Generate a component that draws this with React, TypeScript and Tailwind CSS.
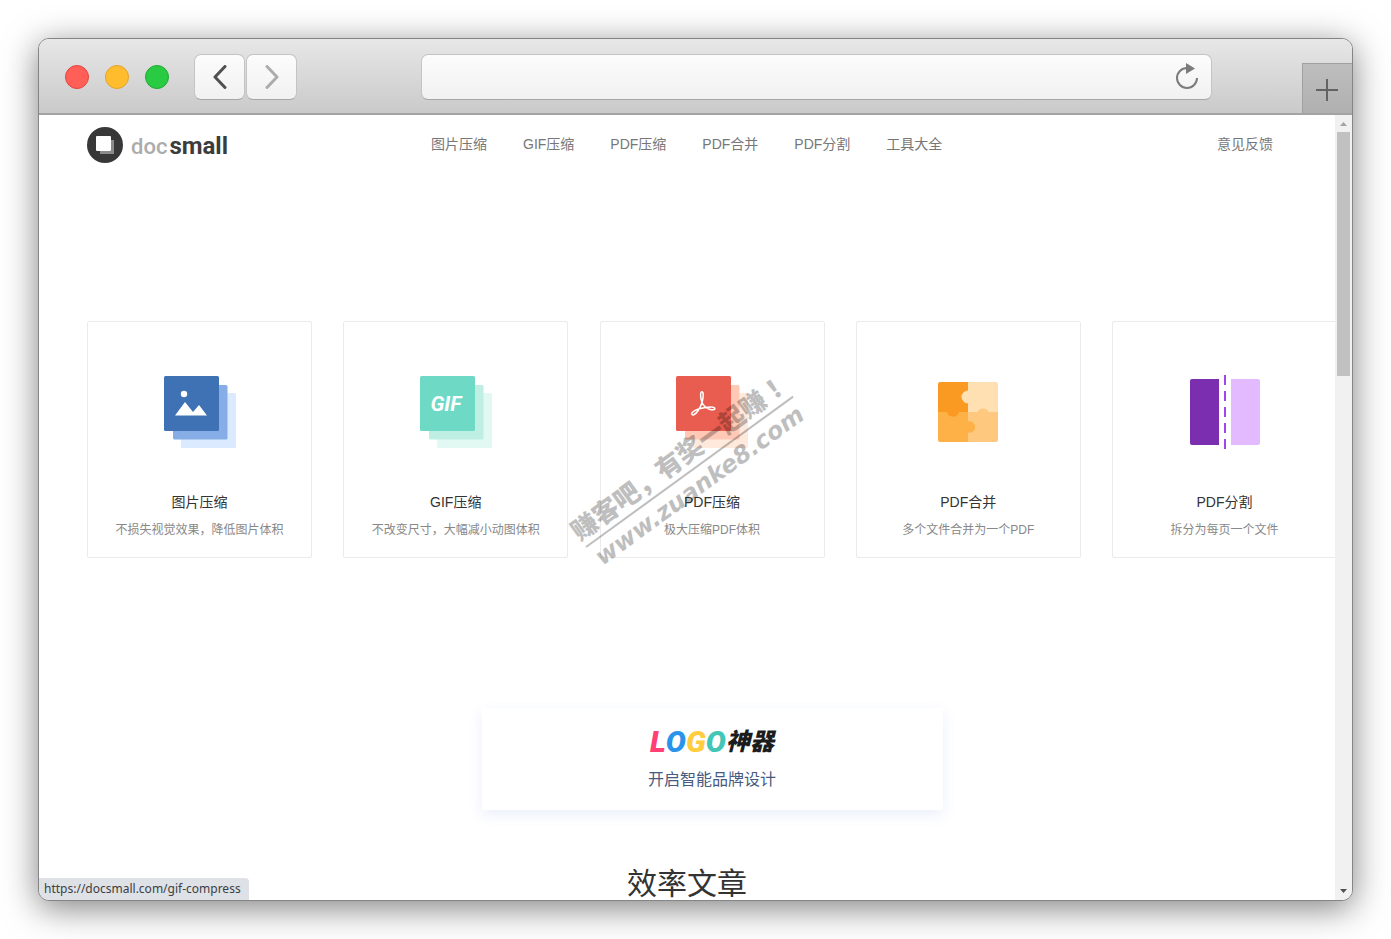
import type { ReactNode } from "react";

function ImageStackIcon() {
  return (
    <svg width="72" height="72" viewBox="0 0 72 72" aria-hidden="true">
      <rect x="17" y="17" width="55" height="55" rx="1.5" fill="#dceaff" />
      <rect x="9" y="9" width="54.5" height="54.5" rx="1.5" fill="#86ade5" />
      <rect width="55" height="55" rx="1.5" fill="#3f72b4" />
      <circle cx="20" cy="18" r="3.2" fill="#fff" />
      <path d="M11 39.5 21 26l8 10 6-7 8 10.5z" fill="#fff" />
    </svg>
  );
}

function GifStackIcon() {
  return (
    <svg width="72" height="72" viewBox="0 0 72 72" aria-hidden="true">
      <rect x="17" y="17" width="55" height="55" rx="1.5" fill="#e2f9f3" />
      <rect x="9" y="9" width="54.5" height="54.5" rx="1.5" fill="#bfeee3" />
      <rect width="55" height="55" rx="1.5" fill="#6edac5" />
      <text
        x="26"
        y="35"
        textAnchor="middle"
        fill="#fff"
        fontSize="21"
        fontWeight="700"
        fontStyle="italic"
        fontFamily="Roboto, sans-serif"
      >
        GIF
      </text>
    </svg>
  );
}

function PdfStackIcon() {
  return (
    <svg width="72" height="72" viewBox="0 0 72 72" aria-hidden="true">
      <rect x="17" y="17" width="55" height="55" rx="1.5" fill="#ffe9dc" />
      <rect x="9" y="9" width="54.5" height="54.5" rx="1.5" fill="#ffc9b6" />
      <rect width="55" height="55" rx="1.5" fill="#e95d50" />
      <path
        d="M26 26.500c-1.600-4.500-2-10.700-.2-10.700 2 0 1.600 5.500.5 9.700-1.700 6.300-5.500 12-8.500 13.300-1.300.5-2.600-.4-2-1.600 1.200-2.300 7.500-4.700 13.700-5.700 4.500-.7 9-.7 9.300 1 .2 1.500-2.800 1.600-5.300.7-3.400-1.200-6.200-3.700-7.500-6.700z"
        fill="none"
        stroke="#fff"
        strokeWidth="1.5"
        strokeLinejoin="round"
      />
    </svg>
  );
}

function PuzzleIcon() {
  return (
    <svg width="72" height="72" viewBox="0 0 72 72" aria-hidden="true">
      <path d="M8 6h28v30H6V8q0-2 2-2z" fill="#fa9a22" />
      <path d="M36 6h28q2 0 2 2v28H36v-8.500a6.200 6.200 0 1 1 0-13z" fill="#ffe0b2" />
      <path d="M36 36h9.500a6 6 0 0 1 11 0H66v28q0 2-2 2H36z" fill="#fec97f" />
      <path d="M6 36h30v9.500a5.700 5.700 0 1 1 0 11V66H8q-2 0-2-2z" fill="#feb146" />
      <path d="M15 36a6.200 6.200 0 0 0 12 0z" fill="#fa9a22" />
    </svg>
  );
}

function SplitIcon() {
  return (
    <svg width="72" height="74" viewBox="0 0 72 74" aria-hidden="true">
      <path d="M30 4v66H3q-2 0-2-2V6q0-2 2-2z" fill="#7b2fb0" />
      <path d="M42 4h27q2 0 2 2v62q0 2-2 2H42z" fill="#e3baff" />
      <path d="M36 0v74" stroke="#a045ea" strokeWidth="2" strokeDasharray="10 6" />
    </svg>
  );
}

type Tool = { title: string; text: string; href: string; icon: ReactNode };

const tools: Tool[] = [
  { title: "图片压缩", text: "不损失视觉效果，降低图片体积", href: "#image-compress", icon: <ImageStackIcon /> },
  { title: "GIF压缩", text: "不改变尺寸，大幅减小动图体积", href: "#gif-compress", icon: <GifStackIcon /> },
  { title: "PDF压缩", text: "极大压缩PDF体积", href: "#pdf-compress", icon: <PdfStackIcon /> },
  { title: "PDF合并", text: "多个文件合并为一个PDF", href: "#pdf-merge", icon: <PuzzleIcon /> },
  { title: "PDF分割", text: "拆分为每页一个文件", href: "#pdf-split", icon: <SplitIcon /> },
];

const links = ["图片压缩", "GIF压缩", "PDF压缩", "PDF合并", "PDF分割", "工具大全"];

function Toolbar() {
  const button =
    "flex h-[46px] w-[51px] items-center justify-center rounded-[7px] border border-[#c4c4c4] border-b-[#a6a6a6] bg-linear-to-b from-[#fcfcfc] to-[#f1f1f1]";
  return (
    <div className="flex h-[76px] shrink-0 items-center border-b-2 border-[#a3a3a3] bg-linear-to-b from-[#e7e7e7] to-[#cacaca] pl-[26px] pt-0.5">
      <div className="flex gap-4">
        <button aria-label="关闭" className="size-6 rounded-full border border-[#e2463f] bg-[#ff5f57]" />
        <button aria-label="最小化" className="size-6 rounded-full border border-[#e1a32b] bg-[#ffbd2e]" />
        <button aria-label="最大化" className="size-6 rounded-full border border-[#22a934] bg-[#28cb41]" />
      </div>
      <div className="ml-[25px] flex gap-px">
        <button aria-label="后退" className={button}>
          <svg width="14" height="24" viewBox="0 0 14 24" fill="none" stroke="#505050" strokeWidth="3" strokeLinecap="round" strokeLinejoin="round">
            <path d="M12 1.500 2 12l10 10.500" />
          </svg>
        </button>
        <button aria-label="前进" className={button}>
          <svg width="14" height="24" viewBox="0 0 14 24" fill="none" stroke="#acacac" strokeWidth="3" strokeLinecap="round" strokeLinejoin="round">
            <path d="M2 1.500 12 12 2 22.500" />
          </svg>
        </button>
      </div>
      <div className="ml-[124px] mr-[90px] flex h-[46px] min-w-0 flex-1 items-center rounded-[7px] border border-[#c4c4c4] border-b-[#a6a6a6] bg-linear-to-b from-[#fcfcfc] to-[#f1f1f1] pr-3">
        <input aria-label="地址" className="min-w-0 flex-1 bg-transparent px-3 outline-none" />
        <button aria-label="重新加载">
          <svg width="24" height="28" viewBox="0 0 24 28">
            <path d="M12 5A10 10 0 1 0 22 15" fill="none" stroke="#7b7b7b" strokeWidth="2" />
            <path d="M11 0v11l9-5.500z" fill="#7b7b7b" />
          </svg>
        </button>
      </div>
      <button aria-label="新标签页" className="flex h-[50px] w-[50px] items-center justify-center self-end border-l border-t border-[#a0a0a0] bg-linear-to-b from-[#bebebe] to-[#b0b0b0] pr-0.5 pt-0.5">
        <svg width="22" height="22" viewBox="0 0 22 22" stroke="#636363" strokeWidth="2">
          <path d="M11 0v22M0 11h22" />
        </svg>
      </button>
    </div>
  );
}

function SiteHeader() {
  return (
    <header className="flex h-[60px] items-center pr-[62px]">
      <a href="#home" className="flex w-[344px] items-center gap-2">
        <svg width="36" height="36" viewBox="0 0 36 36" aria-hidden="true">
          <circle cx="18" cy="18" r="18" fill="#383838" />
          <path d="M24 13h3v14H13v-3h11z" fill="#8b8b8b" />
          <rect x="9" y="9" width="15" height="15" rx="1" fill="#fff" />
        </svg>
        <span className="flex items-baseline gap-0.5 pt-0.5 font-[Roboto,sans-serif] leading-6">
          <span className="text-[22px] font-medium text-[#acacac]">doc</span>
          <span className="text-2xl/6 font-bold text-[#3c3c3c]">small</span>
        </span>
      </a>
      <nav className="flex flex-1 gap-9 pb-0.5 text-sm text-[#777]">
        {links.map((label) => (
          <a key={label} href="#tools" className="whitespace-nowrap">
            {label}
          </a>
        ))}
        <a href="#feedback" className="ml-auto whitespace-nowrap">
          意见反馈
        </a>
      </nav>
    </header>
  );
}

function ToolCard({ title, text, href, icon }: Tool) {
  return (
    <a href={href} className="flex h-[237px] w-[225px] flex-col items-center rounded-xs border border-[#ebebeb]">
      <div className="mt-[54px] flex h-[72px] items-center">{icon}</div>
      <h2 className="mt-11 text-sm text-[#333]">{title}</h2>
      <p className="mt-2.5 text-xs text-[#888]">{text}</p>
    </a>
  );
}

function Promo() {
  return (
    <a href="#logo" className="mx-auto mt-[150px] flex h-[102px] w-[461px] flex-col items-center rounded-xs bg-white shadow-[0_5px_14px_rgba(80,110,230,0.11)]">
      <span className="mt-[18px] flex h-8 items-center font-[Roboto,'Noto_Sans_CJK_SC',sans-serif] text-3xl font-black italic">
        <span className="text-[#ff3f75]">L</span>
        <span className="text-[#2a94ea]">O</span>
        <span className="text-[#ffcd3d]">G</span>
        <span className="text-[#42c6b5]">O</span>
        <span className="text-2xl font-black text-[#1c1c1c]">神器</span>
      </span>
      <span className="mt-2.5 text-base text-[#475a80]">开启智能品牌设计</span>
    </a>
  );
}

function Watermark() {
  return (
    <div className="pointer-events-none absolute left-[650px] top-[356px] flex -translate-x-1/2 -translate-y-1/2 rotate-[-36deg] flex-col items-center whitespace-nowrap font-black text-black opacity-25">
      <span className="text-[26px] leading-8">
        赚客吧，有奖一起赚<span className="font-['Noto_Sans_CJK_TC',sans-serif]">！</span>
      </span>
      <span className="h-0.5 w-64 bg-black" />
      <span className="font-['DejaVu_Sans',sans-serif] text-2xl/8 font-bold italic">www.zuanke8.com</span>
    </div>
  );
}

function Scrollbar() {
  return (
    <div className="flex w-[17px] shrink-0 flex-col items-center bg-[#f1f1f1]">
      <svg width="17" height="17" viewBox="0 0 17 17">
        <path d="M5 11 8.500 7l3.500 4z" fill="#a3a3a3" />
      </svg>
      <div className="h-[244px] w-[13px] bg-[#c1c1c1]" />
      <svg width="17" height="17" viewBox="0 0 17 17" className="mt-auto">
        <path d="M5 6h7l-3.500 4z" fill="#505050" />
      </svg>
    </div>
  );
}

export default function App() {
  return (
    <div className="flex h-screen bg-white p-[38px] font-['Liberation_Sans','Noto_Sans_CJK_SC',sans-serif]">
      <div className="flex min-w-0 flex-1 flex-col overflow-hidden rounded-[11px] border border-[#858585] bg-white shadow-[0_7px_34px_rgba(0,0,0,0.5)]">
        <Toolbar />
        <div className="flex min-h-0 flex-1">
          <main className="relative min-w-0 flex-1 overflow-hidden">
            <div className="pl-12">
              <SiteHeader />
              <div className="min-w-[1250px]">
                <section className="mt-[146px] flex justify-between">
                  {tools.map((tool) => (
                    <ToolCard key={tool.title} {...tool} />
                  ))}
                </section>
                <Promo />
              </div>
            </div>
            <h2 className="mt-14 text-center text-3xl text-[#333]">效率文章</h2>
            <Watermark />
            <div className="absolute bottom-0 left-0 rounded-tr bg-[#dee1e6] pl-[5px] pr-2 font-['Noto_Sans',sans-serif] text-xs leading-[22px] text-[#3c4043]">
              https://docsmall.com/gif-compress
            </div>
          </main>
          <Scrollbar />
        </div>
      </div>
    </div>
  );
}
